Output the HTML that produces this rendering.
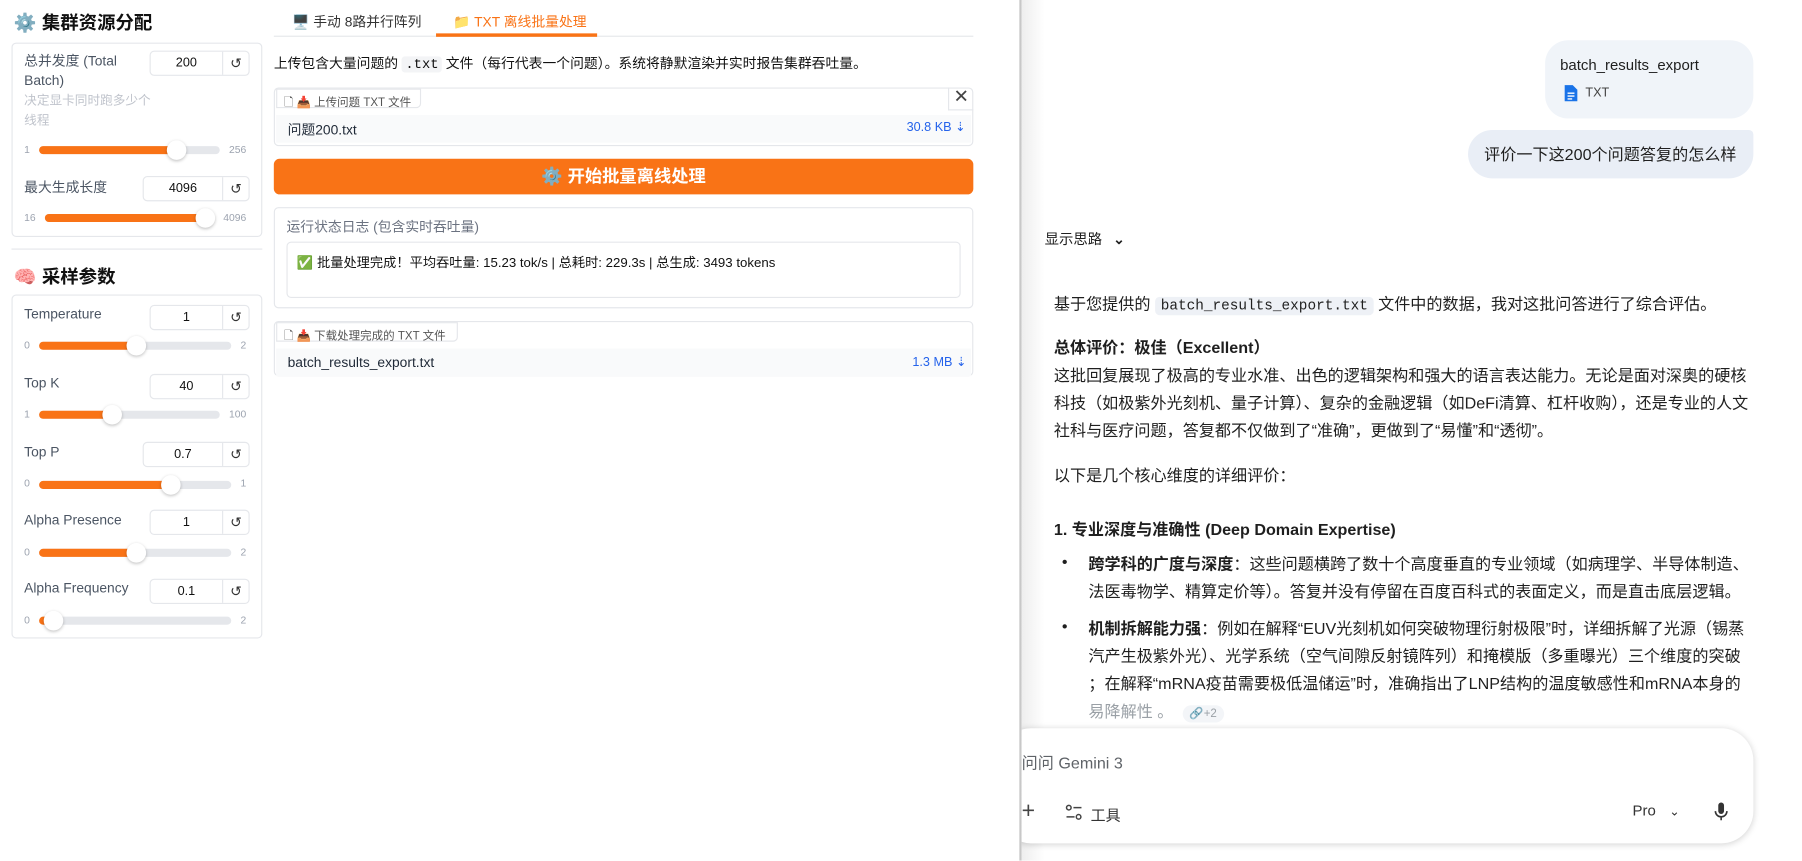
<!DOCTYPE html>
<html><head><meta charset="utf-8">
<style>
*{box-sizing:border-box;margin:0;padding:0}
html,body{width:1802px;height:860px;overflow:hidden;background:#fff}
#w{position:absolute;left:0;top:0;width:1566px;height:748px;transform:scale(1.1505);transform-origin:0 0;font-family:"Liberation Sans","Noto Sans CJK SC",sans-serif;color:#1f2937}
.a{position:absolute;white-space:nowrap}
.box{position:absolute;border:1px solid #e5e7eb;border-radius:4px;background:#fff}
.lbl{font-size:12px;color:#4b5563}
.num{position:absolute;height:22px;border:1px solid #e5e7eb;border-radius:4px;font-size:11px;display:flex}
.num span{flex:1;text-align:center;line-height:20px;color:#111}
.num i{width:23px;border-left:1px solid #e5e7eb;font-style:normal;text-align:center;line-height:20px;font-size:12px;color:#333}
.tr{position:absolute;height:7px;border-radius:4px;background:#e5e7eb}
.fi{position:absolute;left:0;top:0;height:7px;border-radius:4px;background:#f97316}
.th{position:absolute;top:-5px;width:17px;height:17px;border-radius:50%;background:#fff;box-shadow:0 1px 3px rgba(0,0,0,.25)}
.mm{font-size:9px;color:#9ca3af;position:absolute}
.r{font-size:14px;color:#1f1f1f}
</style></head><body><div id="w">

<!-- LEFT -->
<div class="a" style="left:12px;top:6px;font-size:16px;font-weight:bold;color:#111"><span style="color:#8b7fb0">⚙️</span> 集群资源分配</div>
<div class="box" style="left:10px;top:37px;width:218px;height:169px"></div>
<div class="a lbl" style="left:21px;top:45px;line-height:17px;white-space:normal;width:100px">总并发度 (Total Batch)</div>
<div class="a" style="left:21px;top:80px;font-size:11px;color:#c0c4cc;line-height:17px;width:110px;white-space:normal">决定显卡同时跑多少个线程</div>
<div class="num" style="left:130px;top:44px;width:87px"><span>200</span><i>↺</i></div>
<div class="mm" style="left:21px;top:125px">1</div><div class="mm" style="left:199px;top:125px">256</div>
<div class="tr" style="left:34px;top:127px;width:157px"><div class="fi" style="width:119px"></div><div class="th" style="left:111px"></div></div>
<div class="a lbl" style="left:21px;top:154px">最大生成长度</div>
<div class="num" style="left:124px;top:153px;width:93px"><span>4096</span><i>↺</i></div>
<div class="mm" style="left:21px;top:184px">16</div><div class="mm" style="left:194px;top:184px">4096</div>
<div class="tr" style="left:39px;top:186px;width:148px"><div class="fi" style="width:139px"></div><div class="th" style="left:131px"></div></div>

<div class="a" style="left:10px;top:216px;width:218px;height:1px;background:#e5e7eb"></div>
<div class="a" style="left:12px;top:227px;font-size:16px;font-weight:bold;color:#111"><span style="color:#f472b6">🧠</span> 采样参数</div>
<div class="box" style="left:10px;top:256px;width:218px;height:299px"></div>

<div class="a lbl" style="left:21px;top:266px">Temperature</div>
<div class="num" style="left:130px;top:265px;width:87px"><span>1</span><i>↺</i></div>
<div class="mm" style="left:21px;top:295px">0</div><div class="mm" style="left:209px;top:295px">2</div>
<div class="tr" style="left:34px;top:297px;width:167px"><div class="fi" style="width:84px"></div><div class="th" style="left:76px"></div></div>

<div class="a lbl" style="left:21px;top:326px">Top K</div>
<div class="num" style="left:130px;top:325px;width:87px"><span>40</span><i>↺</i></div>
<div class="mm" style="left:21px;top:355px">1</div><div class="mm" style="left:199px;top:355px">100</div>
<div class="tr" style="left:34px;top:357px;width:157px"><div class="fi" style="width:63px"></div><div class="th" style="left:55px"></div></div>

<div class="a lbl" style="left:21px;top:386px">Top P</div>
<div class="num" style="left:124px;top:384px;width:93px"><span>0.7</span><i>↺</i></div>
<div class="mm" style="left:21px;top:415px">0</div><div class="mm" style="left:209px;top:415px">1</div>
<div class="tr" style="left:34px;top:418px;width:167px"><div class="fi" style="width:114px"></div><div class="th" style="left:106px"></div></div>

<div class="a lbl" style="left:21px;top:445px">Alpha Presence</div>
<div class="num" style="left:130px;top:443px;width:87px"><span>1</span><i>↺</i></div>
<div class="mm" style="left:21px;top:475px">0</div><div class="mm" style="left:209px;top:475px">2</div>
<div class="tr" style="left:34px;top:477px;width:167px"><div class="fi" style="width:84px"></div><div class="th" style="left:76px"></div></div>

<div class="a lbl" style="left:21px;top:504px">Alpha Frequency</div>
<div class="num" style="left:130px;top:503px;width:87px"><span>0.1</span><i>↺</i></div>
<div class="mm" style="left:21px;top:534px">0</div><div class="mm" style="left:209px;top:534px">2</div>
<div class="tr" style="left:34px;top:536px;width:167px"><div class="fi" style="width:12px"></div><div class="th" style="left:4px"></div></div>

<!-- MIDDLE -->
<div class="a" style="left:238px;top:31px;width:608px;height:1px;background:#e5e7eb"></div>
<div class="a" style="left:254px;top:10px;font-size:12px;color:#333">🖥️ 手动 8路并行阵列</div>
<div class="a" style="left:394px;top:10px;font-size:12px;color:#f97316">📁 TXT 离线批量处理</div>
<div class="a" style="left:379px;top:29px;width:140px;height:3px;background:#f97316"></div>
<div class="a" style="left:238px;top:46px;font-size:12px;color:#111">上传包含大量问题的 <span style="font-family:'Liberation Mono',monospace;background:#f3f4f6;padding:0 3px;border-radius:3px">.txt</span> 文件（每行代表一个问题）。系统将静默渲染并实时报告集群吞吐量。</div>

<div class="box" style="left:238px;top:76px;width:608px;height:51px"></div>
<div class="box" style="left:240px;top:77px;width:126px;height:17px;border-radius:0 0 4px 0;font-size:10px;color:#555;padding:2px 6px;white-space:nowrap">🗋 📥 上传问题 TXT 文件</div>
<div class="a" style="left:824px;top:76px;width:22px;height:20px;border-left:1px solid #e5e7eb;border-bottom:1px solid #e5e7eb;text-align:center;font-size:16px;line-height:18px;color:#444">✕</div>
<div class="a" style="left:240px;top:100px;width:604px;height:24px;background:#f9fafb"></div>
<div class="a" style="left:250px;top:104px;font-size:12px">问题200.txt</div>
<div class="a" style="left:788px;top:104px;font-size:11px;color:#2563eb">30.8 KB ⇣</div>

<div class="a" style="left:238px;top:138px;width:608px;height:31px;background:#f97316;border-radius:5px;color:#fff;font-size:15px;font-weight:bold;text-align:center;line-height:31px">⚙️ 开始批量离线处理</div>

<div class="box" style="left:238px;top:180px;width:608px;height:88px"></div>
<div class="a" style="left:249px;top:188px;font-size:12px;color:#6b7280">运行状态日志 (包含实时吞吐量)</div>
<div class="box" style="left:249px;top:210px;width:586px;height:49px"></div>
<div class="a" style="left:258px;top:220px;font-size:11.5px;color:#111">✅ 批量处理完成！平均吞吐量: 15.23 tok/s | 总耗时: 229.3s | 总生成: 3493 tokens</div>

<div class="box" style="left:238px;top:279px;width:608px;height:48px"></div>
<div class="box" style="left:240px;top:280px;width:158px;height:17px;border-radius:0 0 4px 0;font-size:10px;color:#555;padding:2px 6px;white-space:nowrap">🗋 📥 下载处理完成的 TXT 文件</div>
<div class="a" style="left:240px;top:303px;width:604px;height:24px;background:#f9fafb"></div>
<div class="a" style="left:250px;top:308px;font-size:12px">batch_results_export.txt</div>
<div class="a" style="left:793px;top:308px;font-size:11px;color:#2563eb">1.3 MB ⇣</div>

<!-- DIVIDER -->
<div class="a" style="left:886px;top:0;width:2px;height:748px;background:#c8c8c8"></div>
<div class="a" style="left:888px;top:0;width:20px;height:748px;background:linear-gradient(90deg,#eee,#fff)"></div>

<!-- RIGHT -->
<div style="position:absolute;left:888px;top:0;width:678px;height:748px;overflow:hidden">
 <div class="a" style="left:455px;top:35px;width:181px;height:68px;background:#f0f4f9;border-radius:20px"></div>
 <div class="a" style="left:468px;top:49px;font-size:13px;color:#1f1f1f">batch_results_export</div>
 <svg class="a" style="left:471px;top:73px" width="13" height="16" viewBox="0 0 13 16"><path d="M1 1h7l4 4v10H1z" fill="#1a73e8"/><path d="M3.5 8h6M3.5 10.5h6M3.5 13h4" stroke="#fff" stroke-width="1.2"/></svg>
 <div class="a" style="left:490px;top:75px;font-size:11px;color:#444">TXT</div>
 <div class="a" style="left:388px;top:113px;width:248px;height:42px;background:#e9eef6;border-radius:22px 4px 22px 22px"></div>
 <div class="a r" style="left:402px;top:124px">评价一下这200个问题答复的怎么样</div>

 <div class="a" style="left:20px;top:197px;font-size:12.5px;color:#1f1f1f">显示思路 <b style="margin-left:6px;font-size:12px">⌄</b></div>

 <div class="a r" style="left:28px;top:254px">基于您提供的 <span style="font-family:'Liberation Mono',monospace;font-size:12.5px;background:#eef1f6;padding:1px 5px;border-radius:4px">batch_results_export.txt</span> 文件中的数据，我对这批问答进行了综合评估。</div>
 <div class="a r" style="left:28px;top:292px;font-weight:bold">总体评价：极佳（Excellent）</div>
 <div class="a r" style="left:28px;top:316px">这批回复展现了极高的专业水准、出色的逻辑架构和强大的语言表达能力。无论是面对深奥的硬核</div>
 <div class="a r" style="left:28px;top:340px">科技（如极紫外光刻机、量子计算）、复杂的金融逻辑（如DeFi清算、杠杆收购），还是专业的人文</div>
 <div class="a r" style="left:28px;top:364px">社科与医疗问题，答复都不仅做到了“准确”，更做到了“易懂”和“透彻”。</div>
 <div class="a r" style="left:28px;top:403px">以下是几个核心维度的详细评价：</div>
 <div class="a r" style="left:28px;top:450px;font-weight:bold">1. 专业深度与准确性 (Deep Domain Expertise)</div>
 <div class="a r" style="left:35px;top:480px">•</div>
 <div class="a r" style="left:58px;top:480px"><b>跨学科的广度与深度</b>：这些问题横跨了数十个高度垂直的专业领域（如病理学、半导体制造、</div>
 <div class="a r" style="left:58px;top:504px">法医毒物学、精算定价等）。答复并没有停留在百度百科式的表面定义，而是直击底层逻辑。</div>
 <div class="a r" style="left:35px;top:536px">•</div>
 <div class="a r" style="left:58px;top:536px"><b>机制拆解能力强</b>：例如在解释“EUV光刻机如何突破物理衍射极限”时，详细拆解了光源（锡蒸</div>
 <div class="a r" style="left:58px;top:560px">汽产生极紫外光）、光学系统（空气间隙反射镜阵列）和掩模版（多重曝光）三个维度的突破</div>
 <div class="a r" style="left:58px;top:584px">；在解释“mRNA疫苗需要极低温储运”时，准确指出了LNP结构的温度敏感性和mRNA本身的</div>
 <div class="a r" style="left:58px;top:608px;color:#9aa0a6">易降解性 。 <span style="font-size:10px;background:#f3f5f8;border-radius:8px;padding:2px 6px;margin-left:4px">🔗+2</span></div>

 <div class="a" style="left:-20px;top:633px;width:656px;height:100px;background:#fff;border-radius:28px;box-shadow:0 1px 6px rgba(0,0,0,.18)"></div>
 <div class="a" style="left:0;top:653px;font-size:14px;color:#5f6368">问问 Gemini 3</div>
 <div class="a" style="left:0;top:694px;font-size:20px;color:#444;font-weight:300">+</div>
 <svg class="a" style="left:38px;top:699px" width="15" height="14" viewBox="0 0 15 14"><circle cx="3" cy="3" r="2" fill="none" stroke="#444" stroke-width="1.3"/><path d="M7 3h7M1 11h7" stroke="#444" stroke-width="1.3"/><circle cx="11.5" cy="11" r="2" fill="none" stroke="#444" stroke-width="1.3"/></svg>
 <div class="a" style="left:60px;top:698px;font-size:13px;color:#333">工具</div>
 <div class="a" style="left:531px;top:697px;font-size:13px;color:#333">Pro <span style="margin-left:8px;font-size:11px">⌄</span></div>
 <svg class="a" style="left:602px;top:697px" width="12" height="17" viewBox="0 0 12 17"><rect x="3.5" y="0.5" width="5" height="10" rx="2.5" fill="#333"/><path d="M1 8a5 5 0 0 0 10 0M6 13v3" stroke="#333" stroke-width="1.4" fill="none"/></svg>
</div>

</div></body></html>
